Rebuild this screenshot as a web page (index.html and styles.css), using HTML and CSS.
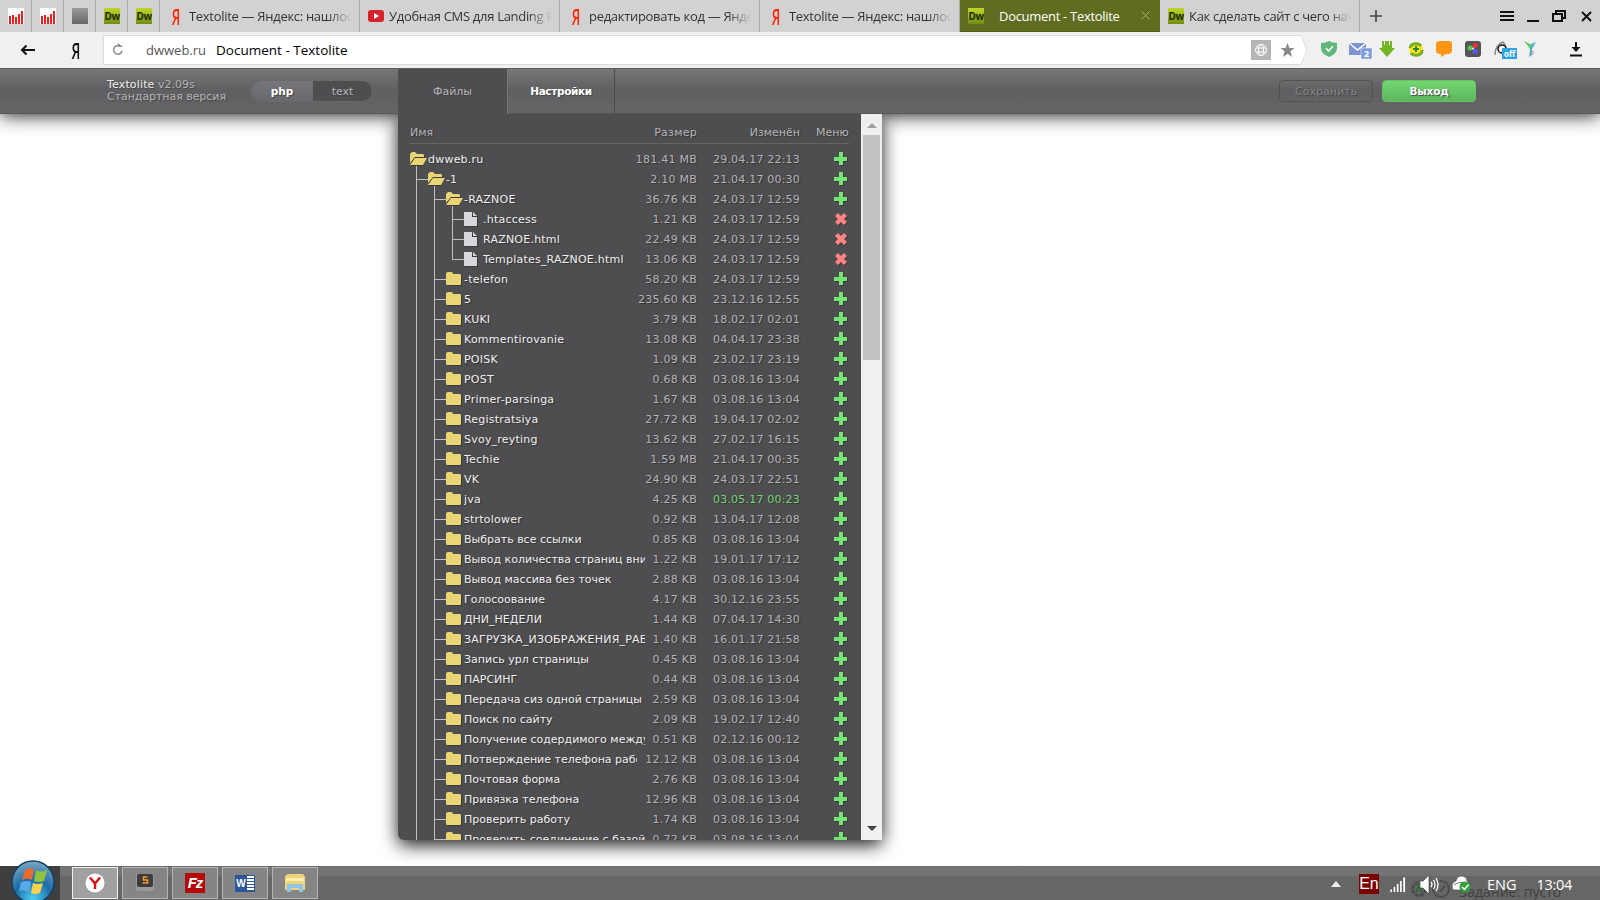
FILE: index.html
```html
<!DOCTYPE html>
<html lang="ru">
<head>
  <meta charset="UTF-8" />
  <title>Document - Textolite</title>
  <link rel="stylesheet" href="styles.css">
</head>
<body>

<svg class="sprite">
  <symbol id="i-open" viewBox="0 0 18 20">
    <path fill="#3b3b3c" d="M1 5h5l2 2h7v3h2l-4 7H1z"/>
    <path fill="#ead575" d="M0 14V5l2-2h3l2 2h6l1 1v2H5z"/>
    <path fill="#ead575" d="M5 9h12l-4 7H0z"/>
    <path fill="#bfbfbf" d="M6 17h1v3H6z"/>
  </symbol>
  <symbol id="i-folder" viewBox="0 0 18 20">
    <path fill="#3b3b3c" d="M2 5h13l1 1v11H2z"/>
    <path fill="#ead575" d="M0 5q0-2 2-2h3q2 0 2 2h7q1 0 1 1v9q0 1-1 1H1q-1 0-1-1z"/>
  </symbol>
  <symbol id="i-file" viewBox="0 0 18 20">
    <path fill="#3b3b3c" d="M1 4h9l4 4v10H1z"/>
    <path fill="#d8d8dc" d="M0 3h8v5h5v9H0z"/>
    <path fill="#d8d8dc" d="M9 3l4 4H9z"/>
  </symbol>
  <symbol id="i-plus" viewBox="0 0 14 14">
    <path fill="#3b3b3c" d="M6 1h4v5h4v4h-4v4H6v-4H1V6h5z"/>
    <path fill="#74e574" d="M5 0h4v5h4v4H9v4H5V9H0V5h5z"/>
  </symbol>
  <symbol id="i-cross" viewBox="0 0 14 14">
    <path fill="#3b3b3c" d="M2 5l3-3 3 3 3-3 3 3-3 3 3 3-3 3-3-3-3 3-3-3 3-3z"/>
    <path fill="#ff8585" d="M1 4l3-3 3 3 3-3 3 3-3 3 3 3-3 3-3-3-3 3-3-3 3-3z"/>
  </symbol>
  <symbol id="i-stat" viewBox="0 0 16 16">
    <path fill="#fff" d="M0 0h16v16H0z"/>
    <path fill="#f02020" d="M1 8h2v8H1zM4 7h2v9H4zM7 9h2v7H7zM10 6h2v10h-2zM13 3h2v13h-2z"/>
  </symbol>
</svg>

<!-- Browser tabs -->
<div class="tabs">
  <div class="tab pin"><svg width="16" height="16"><use href="#i-stat"/></svg></div>
  <div class="tab pin"><svg width="16" height="16"><use href="#i-stat"/></svg></div>
  <div class="tab pin"><i class="blank"></i></div>
  <div class="tab pin"><i class="dw">Dw</i></div>
  <div class="tab pin"><i class="dw">Dw</i></div>
  <div class="tab"><i class="ya">Я</i><span class="tab-text">Textolite — Яндекс: нашлось</span></div>
  <div class="tab"><svg width="16" height="16"><rect y="2" width="16" height="12" rx="3" fill="#d8232a"/><path d="M6 5l5 3-5 3z" fill="#fff"/></svg><span class="tab-text">Удобная CMS для Landing P</span></div>
  <div class="tab"><i class="ya">Я</i><span class="tab-text">редактировать код — Яндек</span></div>
  <div class="tab"><i class="ya">Я</i><span class="tab-text">Textolite — Яндекс: нашлось</span></div>
  <div class="tab active"><i class="dw">Dw</i><span class="tab-text">Document - Textolite</span>
    <svg class="tab-close" width="9" height="9" stroke="#a9b27a"><path d="M.5.5l8 8M8.5.5l-8 8"/></svg></div>
  <div class="tab"><i class="dw">Dw</i><span class="tab-text">Как сделать сайт с чего нач</span></div>
  <svg class="tab-new" width="12" height="12" stroke="#444" stroke-width="1.6"><path d="M6 0v12M0 6h12"/></svg>
  <svg class="win" width="94" height="14" stroke="#111" stroke-width="2" fill="none">
    <path d="M0 3h14M0 7h14M0 11h14M27 12h12"/>
    <path d="M56 5V2h9v7h-3M53 5h9v7h-9z"/>
    <path d="M82 3l9 9M91 3l-9 9"/>
  </svg>
</div>

<!-- Address bar -->
<div class="toolbar">
  <svg class="back" width="15" height="12" stroke="#111" stroke-width="2" fill="none"><path d="M15 6H2M6.500 1.500L2 6l4.500 4.500"/></svg>
  <i class="ya-btn">Я</i>
  <div class="address">
    <svg width="12" height="13" fill="none" stroke="#8c8c8c" stroke-width="1.500"><path d="M8.500 3.500A4.300 4.300 0 1 0 10 8"/><path fill="#8c8c8c" stroke="none" d="M6 0l5 4H6z"/></svg>
    <span class="host">dwweb.ru</span>
    <span class="title">Document - Textolite</span>
    <svg class="globe" width="20" height="20" fill="none" stroke="#fff"><path fill="#b5b5b5" stroke="none" d="M0 0h20v20H0z"/><circle cx="10" cy="10" r="5.500"/><ellipse cx="10" cy="10" rx="2.500" ry="5.500"/><path d="M5 8h10M5 12h10"/></svg>
    <svg class="star" width="15" height="14"><path fill="#8a8a8a" d="M7.500 0l2 5h5l-4 3.300L12 14l-4.500-3.300L3 14l1.500-5.700-4-3.300h5z"/></svg>
  </div>
  <svg class="address-end" width="8" height="30"><path fill="#fff" stroke="#dcdcdc" d="M-1 .5H1L7 15 1 29.500h-2"/></svg>
  <svg class="ext" width="270" height="20">
    <path fill="#5fb878" d="M0 2q5 0 8-2 3 2 8 2v5q0 6-8 9-8-3-8-9z"/><path d="M5 7l2.500 3L12 5" stroke="#fff" stroke-width="1.500" fill="none"/>
    <path fill="#7c95d2" d="M28 2h17v12H28z"/><path d="M28 2l8.500 7L45 2" stroke="#fff" stroke-width="1.500" fill="none"/>
    <path fill="#7f9bdc" stroke="#fff" stroke-width=".5" d="M40 7h11v11H40z"/><text x="43" y="16" class="badge">2</text>
    <path fill="#72b626" d="M61 0h10v7h3l-8 9-8-9h3z"/><path stroke="#eee" d="M63.500 0v4M68.500 0v4"/>
    <circle cx="95" cy="8" r="7" fill="#ffe51f"/><path d="M89 7a6 5 0 0 1 11-2M101 9a6 5 0 0 1-11 3" stroke="#78ae28" stroke-width="3" fill="none"/><path d="M95 5v6M92 8h6" stroke="#238a37" stroke-width="2"/>
    <path fill="#ff9514" d="M119 0h9q3 0 3 3v6q0 3-3 4h-3l-5 3v-3h-1q-4 0-4-4V3q0-3 4-3z"/>
    <rect x="144" width="16" height="16" rx="3" fill="#555"/><circle cx="149" cy="7" r="2.500" fill="#50c850"/><circle cx="154" cy="4.500" r="2.500" fill="#e33"/><circle cx="154" cy="10.500" r="2.500" fill="#55f"/><circle cx="152" cy="7.500" r="1" fill="#fff"/>
    <path d="M174 14q0-10 8-13 3 3 3 6" stroke="#888" stroke-width="1.500" fill="none"/><circle cx="181" cy="8" r="4" stroke="#111" stroke-width="1.500" fill="#fff"/>
    <path fill="#2fa0e0" d="M181 7h15v11h-15z"/><text x="183" y="16" class="badge off">off</text>
    <path fill="#68c94f" d="M203 0l8 4v6q-3-2-4-5z"/><path fill="#46b9ca" d="M210 3l5-2-4 7v6l-3 2 1-7z"/><path d="M210 9q4 2 1 5" stroke="#e5738a" fill="none"/>
    <path d="M255 1v9M249 14.500h12" stroke="#111" stroke-width="2"/><path d="M250.500 6h9l-4.500 5z" fill="#111"/>
  </svg>
</div>

<!-- Page header -->
<header class="header">
  <div class="brand"><p><b>Textolite</b> v2.09s</p><p class="edition">Стандартная версия</p></div>
  <div class="toggle"><span class="on">php</span><span>text</span></div>
  <nav class="menu"><a class="current">Файлы</a><a class="settings">Настройки</a></nav>
  <div class="buttons"><a class="save">Сохранить</a><a class="exit">Выход</a></div>
</header>

<!-- Files -->
<main class="page">
  <div class="files">
    <div class="files-body">
      <div class="row files-head"><span class="name">Имя</span><span class="size">Размер</span><span class="date">Изменён</span><span class="act">Меню</span></div>
      <div id="tree"></div>
    </div>
    <div class="scrollbar"><i class="up"></i><i class="thumb"></i><i class="down"></i></div>
  </div>
</main>

<!-- Taskbar -->
<footer class="taskbar">
  <div class="start">
    <svg class="orb" width="46" height="46" viewBox="0 0 46 46">
      <defs><radialGradient id="orb" cx=".5" cy=".9" r=".9"><stop offset="0" stop-color="#4fd0f5"/><stop offset=".5" stop-color="#1c6ca8"/><stop offset="1" stop-color="#7aa7c4"/></radialGradient></defs>
      <circle cx="23" cy="23" r="21" fill="url(#orb)" stroke="#17405e" stroke-width="1.500"/>
      <path fill="#ea6a2c" d="M15 11q4-3 9-1l-2 11q-5-3-10 0z"/><path fill="#8fc43f" d="M26 11q5 3 11 0l-3 11q-5 2-10 0z"/>
      <path fill="#5aa9e6" d="M11 23q6-2 10 0l-2 10q-5-3-10-1z"/><path fill="#fbd04b" d="M23 24q4 2 10 0l-3 10q-5 2-9 0z"/>
    </svg>
  </div>
  <div class="apps">
    <div class="app current"><svg width="20" height="20"><circle cx="10" cy="10" r="9.500" fill="#fff"/><path d="M5 4.500l5 6 5-6M10 10v6" stroke="#d8141c" stroke-width="2.500" fill="none"/></svg></div>
    <div class="app"><svg width="20" height="20"><rect x="1" y="1" width="18" height="17" rx="2" fill="#999"/><rect x="2" y="1" width="16" height="13" rx="2" fill="#3c3c3c"/><path d="M12.500 4H8.500v3h4v3H7.500" stroke="#f59a2c" stroke-width="1.600" fill="none"/></svg></div>
    <div class="app"><i class="fz">Fz</i></div>
    <div class="app"><i class="word"><b>W</b></i></div>
    <div class="app"><svg width="20" height="20"><path fill="#f0d578" d="M0 3l3-2h15l2 3v13H0z"/><path fill="#fbeeb2" d="M1 5h18v3H1z"/><path fill="#8cc7ea" d="M2 11h16v8h-4v-4H6v4H2z"/></svg></div>
  </div>
  <div class="tray">
    <span class="ghost">Задание: пусто</span>
    <svg class="gears" width="40" height="20" fill="none" stroke="#4c4c4c" stroke-width="2"><circle cx="9" cy="10" r="6.500" stroke-width="3" stroke-dasharray="4 1"/><path d="M6.500 13L9 6l2.500 7" stroke="#2f6b35"/><circle cx="31" cy="10" r="8"/><path d="M30 13l5-6"/></svg>
    <svg class="arrow" width="10" height="6"><path d="M0 6l5-6 5 6z" fill="#eee"/></svg>
    <span class="en">En</span>
    <svg class="signal" width="16" height="17" fill="#fff" stroke="#333" stroke-width=".5"><path d="M0 13h2.500v3.500H0zM3.200 10.500h2.500v6H3.200zM6.400 7.500h2.500v9H6.400zM9.600 4.500h2.500v12H9.600zM12.800 1h2.700v15.500h-2.700z"/></svg>
    <svg class="sound" width="20" height="19" fill="none" stroke="#fff" stroke-width="1.300"><path fill="#fff" stroke="#333" stroke-width=".6" d="M0 6h3l6-6v19l-6-6H0z"/><path d="M11 7q2 2.500 0 5M13.500 5q3 4.500 0 9M16 3q4 6.500 0 13"/></svg>
    <svg class="cloud" width="20" height="18"><path fill="#fff" stroke="#444" stroke-width=".6" d="M1 11q0-4 4-5 1-5 6-5 5 1 5 5l3 4-8 5H3q-2-1-2-4z"/><path d="M3 10q5-4 13-2" stroke="#777" fill="none"/><circle cx="14" cy="12" r="5.500" fill="#33a03a"/><path d="M11 12l2.500 2.500 4-5" stroke="#fff" stroke-width="1.500" fill="none"/></svg>
    <span class="lang">ENG</span>
    <span class="clock">13:04</span>
  </div>
</footer>

<script src="script.js"></script>
</body>
</html>
```
FILE: styles.css
```css
* {
  box-sizing: border-box;
}

html, body {
  margin: 0;
  padding: 0;
  height: 900px;
  overflow: hidden;
}

body {
  display: flex;
  flex-direction: column;
  background: #fff;
  font-family: "DejaVu Sans", sans-serif;
  font-size: 11px;
}

i {
  font-style: normal;
}

p {
  margin: 0;
}

svg {
  display: block;
  flex: none;
}

.sprite {
  position: absolute;
  width: 0;
  height: 0;
}

/* browser */
.tabs {
  display: flex;
  align-items: center;
  height: 32px;
  flex: none;
  background: #d2d2d2;
  font: 13px "Open Sans", sans-serif;
  color: #333;
}

.tab {
  display: flex;
  align-items: center;
  width: 200px;
  height: 32px;
  padding: 0 7px 0 8px;
  border-right: 1px solid #adadad;
  flex: none;
}

.pin {
  width: 32px;
}

.blank, .dw {
  width: 16px;
  height: 16px;
  flex: none;
  background: linear-gradient(#999, #666);
}

.dw {
  background: linear-gradient(#c0d82c, #6f8d10);
  color: #1d2a00;
  font: bold 10px/16px "Open Sans", sans-serif;
  text-align: center;
  letter-spacing: -0.5px;
}

.ya {
  width: 16px;
  flex: none;
  color: #f8280a;
  font: 600 22px/30px "Open Sans", sans-serif;
  transform: scaleX(0.6);
  text-align: center;
}

.tab-text {
  flex: 1;
  height: 32px;
  margin-left: 5px;
  line-height: 32px;
  letter-spacing: -0.3px;
  overflow: hidden;
  white-space: nowrap;
  -webkit-mask-image: linear-gradient(90deg, #000 85%, transparent);
}

.active {
  background: #606c1f;
  border: 0;
  border-bottom: 1px solid #4f5a14;
  color: #fff;
}

.active .tab-text {
  margin-left: 15px;
  -webkit-mask-image: none;
}

.tab-close {
  margin-right: 3px;
}

.tab-new {
  margin-left: 10px;
}

.win {
  margin-left: auto;
  margin-right: 6px;
}

.toolbar {
  display: flex;
  align-items: center;
  height: 36px;
  flex: none;
  position: relative;
  z-index: 2;
  background: #f0f0f0;
}

.back {
  margin-left: 20px;
}

.ya-btn {
  width: 16px;
  margin-left: 33px;
  color: #111;
  font: 600 22px/34px "Open Sans", sans-serif;
  transform: scaleX(0.62);
  text-align: center;
}

.address {
  display: flex;
  align-items: center;
  width: 1197px;
  height: 30px;
  margin-left: 19px;
  padding: 0 5px 1px 8px;
  background: #fff;
  border: 1px solid #dcdcdc;
  border-right: 0;
  font: 13.5px "Open Sans", sans-serif;
}

.host {
  margin-left: 22px;
  color: #555;
  font-size: 13px;
}

.title {
  margin-left: 10px;
}

.globe {
  margin-left: auto;
}

.star {
  margin: 0 0 0 9px;
}

.ext {
  margin: 2px 0 0 13px;
}

.badge {
  font: bold 9px "Open Sans", sans-serif;
  fill: #fff;
}

.off {
  font-size: 8px;
}

/* page header */
.header {
  display: flex;
  height: 46px;
  flex: none;
  position: relative;
  background: linear-gradient(#77777a, #5f5f61 50%, #666668);
  border-top: 1px solid #5c5c5e;
  border-bottom: 1px solid #555;
  box-shadow: 0 0 20px #000;
  color: #b4b4b8;
  text-shadow: 1px 1px 1px #444;
}

.brand {
  width: 143px;
  margin-left: 107px;
  padding-top: 10px;
  line-height: 12px;
}

.brand b {
  color: #eee;
  font-weight: normal;
  letter-spacing: 0.15px;
}

.edition {
  letter-spacing: -0.05px;
}

.toggle {
  display: flex;
  width: 123px;
  height: 22px;
  margin-top: 11px;
  border-radius: 11px;
  overflow: hidden;
  background: #4e4e50;
  border: 1px solid #6a6a6c;
  line-height: 21px;
  text-align: center;
}

.toggle span {
  width: 59px;
}

.toggle .on {
  width: 62px;
  background: linear-gradient(#76767a, #69696d);
  color: #fff;
  font-weight: bold;
  font-size: 10.5px;
}

.menu {
  display: flex;
  margin-left: 25px;
  height: 46px;
  line-height: 45px;
  text-align: center;
}

.menu .current {
  width: 109px;
  background: #4e4e50;
}

.menu .settings {
  width: 108px;
  height: 45px;
  border-left: 1px solid #77777a;
  border-right: 1px solid #4b4b4d;
  color: #fff;
  font-weight: bold;
  font-size: 10.5px;
  letter-spacing: -0.35px;
}

.buttons {
  display: flex;
  gap: 9px;
  margin: 11px 124px 0 auto;
}

.buttons a {
  width: 94px;
  height: 22px;
  border-radius: 4px;
  line-height: 21px;
  text-align: center;
}

.save {
  border: 1px solid #525254;
  color: #858588;
}

.exit {
  background: linear-gradient(#72d872, #5db55d);
  border: 1px solid #64c464;
  color: #fff;
  font-weight: bold;
  font-size: 10.5px;
  letter-spacing: -0.2px;
}

/* file tree */
.page {
  flex: 1;
}

.files {
  display: flex;
  width: 484px;
  height: 726px;
  margin-left: 398px;
  position: relative;
  background: #4e4e50;
  border-radius: 0 0 6px 6px;
  box-shadow: 0 5px 18px rgba(0, 0, 0, 0.9);
  clip-path: inset(0 -40px -40px -40px);
}

.files-body {
  width: 463px;
  padding: 6px 12px 0;
  overflow: hidden;
  border-radius: 0 0 0 6px;
}

.row {
  display: flex;
  align-items: center;
  height: 20px;
  color: #b4b4b8;
  white-space: nowrap;
  text-shadow: 1px 1px 1px #333;
}

.files-head {
  height: 24px;
  margin-bottom: 5px;
  padding-top: 2px;
  border-bottom: 1px solid #646466;
}

.name {
  flex: 1;
  overflow: hidden;
  margin-right: 8px;
  line-height: 20px;
}

.files-head .name {
  padding-top: 1px;
}

.row .label {
  height: 20px;
  line-height: 21px;
  color: #f0f0f2;
}

.file .label {
  margin-left: 1px;
}

.latin {
  letter-spacing: 0.22px;
}

.size {
  letter-spacing: 0.25px;
}

.date {
  width: 87px;
  margin-left: 16px;
  letter-spacing: 0.2px;
  text-align: right;
}

.files-head .date {
  letter-spacing: 0;
}

.recent {
  color: #74d574;
}

.act {
  width: 33px;
  margin-left: 16px;
}

.act svg {
  width: 14px;
  height: 14px;
  margin: 0 0 0 18px;
}

.icon {
  width: 18px;
  height: 20px;
}

.guide {
  width: 18px;
  height: 20px;
  flex: none;
  background: linear-gradient(#bfbfbf, #bfbfbf) 6px 0 / 1px 20px no-repeat;
}

.branch {
  background: linear-gradient(#bfbfbf, #bfbfbf) 6px 0 / 1px 20px no-repeat,
    linear-gradient(#bfbfbf, #bfbfbf) 6px 10px / 12px 1px no-repeat;
}

.last {
  background-size: 1px 10px, 12px 1px;
}

.scrollbar {
  display: flex;
  flex-direction: column;
  align-items: center;
  width: 21px;
  background: #f0f0f0;
}

.up {
  margin: 9px 0 7px;
  border: 5px solid transparent;
  border-top: 0;
  border-bottom-color: #a0a0a0;
}

.thumb {
  width: 17px;
  height: 225px;
  background: #c1c1c1;
}

.down {
  margin: auto 0 9px;
  border: 5px solid transparent;
  border-bottom: 0;
  border-top-color: #444;
}

/* taskbar */
.taskbar {
  display: flex;
  height: 34px;
  flex: none;
  position: relative;
  background: linear-gradient(#646464 0, #757575 1px, #737373 9px, #666 11px);
}

.start {
  width: 60px;
  background: #3f3f3f;
}

.orb {
  position: absolute;
  left: 10px;
  top: -7px;
}

.apps {
  display: flex;
  gap: 4px;
  margin: 1px 0 0 12px;
}

.app {
  display: flex;
  align-items: center;
  justify-content: center;
  width: 46px;
  height: 32px;
  background: #858585;
  border: 1px solid #b4b4b4;
}

.app.current {
  background: #a0a0a0;
  border-color: #f0f0f0;
}

.fz {
  width: 20px;
  height: 20px;
  background: #b50a0a;
  color: #fff;
  font: italic bold 15px/19px "Liberation Sans", sans-serif;
  letter-spacing: -1px;
  text-align: center;
}

.word {
  width: 20px;
  height: 17px;
  border: 1px solid #2b579a;
  background: repeating-linear-gradient(#fff 0 2px, #2b579a 2px 3px);
}

.word b {
  display: block;
  width: 12px;
  height: 17px;
  margin: -1px;
  background: #2b579a;
  color: #fff;
  font: bold 10px/17px "Liberation Sans", sans-serif;
  text-align: center;
}

.tray {
  display: flex;
  align-items: center;
  margin: 2px 28px 0 auto;
  color: #fff;
  font: 14.5px "Open Sans", sans-serif;
}

/* desktop gadget showing through the glass */
.ghost, .gears {
  position: absolute;
  left: 1459px;
  bottom: -1px;
  color: #414141;
  font-size: 14px;
}

.gears {
  left: 1410px;
  bottom: 1px;
}

.arrow, .en, .signal, .sound, .cloud, .lang, .clock {
  position: relative;
}

.en {
  width: 20px;
  height: 20px;
  margin: 0 11px 0 18px;
  background: #7d0000;
  font: 16px/20px "Liberation Sans", sans-serif;
  text-align: center;
}

.sound {
  margin: 0 11px 0 14px;
}

.lang {
  margin: 0 20px 0 16px;
}

.clock {
  letter-spacing: -0.3px;
}
```
FILE: script.js
```js
// [depth, icon, name, size, date]
const rows = [
  [0, 'open', 'dwweb.ru', '181.41 MB', '29.04.17 22:13'],
  [1, 'open', '-1', '2.10 MB', '21.04.17 00:30'],
  [2, 'open', '-RAZNOE', '36.76 KB', '24.03.17 12:59'],
  [3, 'file', '.htaccess', '1.21 KB', '24.03.17 12:59'],
  [3, 'file', 'RAZNOE.html', '22.49 KB', '24.03.17 12:59'],
  [3, 'file', 'Templates_RAZNOE.html', '13.06 KB', '24.03.17 12:59'],
  [2, 'folder', '-telefon', '58.20 KB', '24.03.17 12:59'],
  [2, 'folder', '5', '235.60 KB', '23.12.16 12:55'],
  [2, 'folder', 'KUKI', '3.79 KB', '18.02.17 02:01'],
  [2, 'folder', 'Kommentirovanie', '13.08 KB', '04.04.17 23:38'],
  [2, 'folder', 'POISK', '1.09 KB', '23.02.17 23:19'],
  [2, 'folder', 'POST', '0.68 KB', '03.08.16 13:04'],
  [2, 'folder', 'Primer-parsinga', '1.67 KB', '03.08.16 13:04'],
  [2, 'folder', 'Registratsiya', '27.72 KB', '19.04.17 02:02'],
  [2, 'folder', 'Svoy_reyting', '13.62 KB', '27.02.17 16:15'],
  [2, 'folder', 'Techie', '1.59 MB', '21.04.17 00:35'],
  [2, 'folder', 'VK', '24.90 KB', '24.03.17 22:51'],
  [2, 'folder', 'jva', '4.25 KB', '03.05.17 00:23'],
  [2, 'folder', 'strtolower', '0.92 KB', '13.04.17 12:08'],
  [2, 'folder', 'Выбрать все ссылки', '0.85 KB', '03.08.16 13:04'],
  [2, 'folder', 'Вывод количества страниц вни', '1.22 KB', '19.01.17 17:12'],
  [2, 'folder', 'Вывод массива без точек', '2.88 KB', '03.08.16 13:04'],
  [2, 'folder', 'Голосоование', '4.17 KB', '30.12.16 23:55'],
  [2, 'folder', 'ДНИ_НЕДЕЛИ', '1.44 KB', '07.04.17 14:30'],
  [2, 'folder', 'ЗАГРУЗКА_ИЗОБРАЖЕНИЯ_РАБ', '1.40 KB', '16.01.17 21:58'],
  [2, 'folder', 'Запись урл страницы', '0.45 KB', '03.08.16 13:04'],
  [2, 'folder', 'ПАРСИНГ', '0.44 KB', '03.08.16 13:04'],
  [2, 'folder', 'Передача сиз одной страницы', '2.59 KB', '03.08.16 13:04'],
  [2, 'folder', 'Поиск по сайту', '2.09 KB', '19.02.17 12:40'],
  [2, 'folder', 'Получение содердимого между', '0.51 KB', '02.12.16 00:12'],
  [2, 'folder', 'Потверждение телефона рабо', '12.12 KB', '03.08.16 13:04'],
  [2, 'folder', 'Почтовая форма', '2.76 KB', '03.08.16 13:04'],
  [2, 'folder', 'Привязка телефона', '12.96 KB', '03.08.16 13:04'],
  [2, 'folder', 'Проверить работу', '1.74 KB', '03.08.16 13:04'],
  [2, 'folder', 'Проверить соединение с базой', '0.72 KB', '03.08.16 13:04']
];

document.getElementById('tree').innerHTML = rows.map(([depth, icon, name, size, date], i) => {
  let guides = '';
  for (let d = 1; d <= depth; d++) {
    const last = depth === 3 && rows[i + 1][0] < 3 ? ' last' : '';
    guides += `<i class="guide${d === depth ? ' branch' + last : ''}"></i>`;
  }
  const latin = /[a-z]|РАБ$/i.test(name) ? ' latin' : '';
  const recent = date.startsWith('03.05.17') ? ' recent' : '';
  const act = icon === 'file' ? 'cross' : 'plus';
  return `<div class="row ${icon}">${guides}<svg class="icon"><use href="#i-${icon}"/></svg>
    <span class="name label${latin}">${name}</span><span class="size">${size}</span>
    <span class="date${recent}">${date}</span><span class="act"><svg><use href="#i-${act}"/></svg></span></div>`;
}).join('');
```
